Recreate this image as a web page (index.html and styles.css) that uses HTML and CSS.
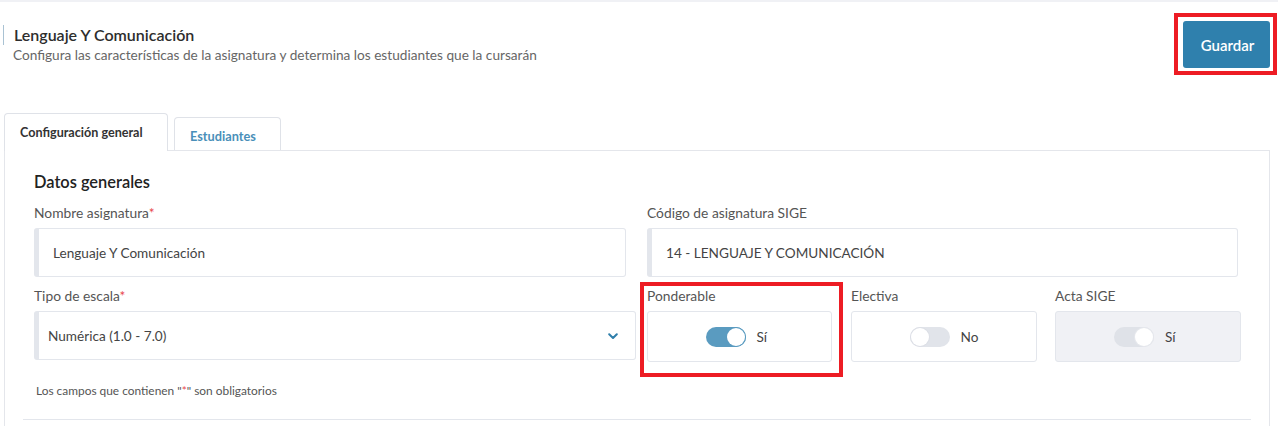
FILE: index.html
```html
<!DOCTYPE html>
<html lang="es">
<head>
<meta charset="utf-8">
<title>Lenguaje Y Comunicación</title>
<link rel="stylesheet" href="styles.css">
</head>
<body>
<div class="topbar"></div>
<header class="page-header">
  <div class="title-block">
    <h1 class="title">Lenguaje Y Comunicación</h1>
    <p class="subtitle">Configura las características de la asignatura y determina los estudiantes que la cursarán</p>
  </div>
  <div class="annotated annotated-btn">
    <button class="btn-primary">Guardar</button>
  </div>
</header>

<nav class="tabs">
  <div class="tab tab-active">Configuración general</div>
  <div class="tab tab-link">Estudiantes</div>
</nav>

<section class="panel">
  <div class="panel-inner">
    <h2 class="section-title">Datos generales</h2>
    <div class="row row-1">
      <div class="field field-name">
        <label class="label">Nombre asignatura<span class="req">*</span></label>
        <div class="input">Lenguaje Y Comunicación</div>
      </div>
      <div class="field field-code">
        <label class="label">Código de asignatura SIGE</label>
        <div class="input">14 - LENGUAJE Y COMUNICACIÓN</div>
      </div>
    </div>
    <div class="row row-2">
      <div class="field field-select">
        <label class="label">Tipo de escala<span class="req">*</span></label>
        <div class="input select">
          <span>Numérica (1.0 - 7.0)</span>
          <svg class="chevron" width="10" height="7" viewBox="0 0 10 7"><path d="M1.2 1.2 L5 5 L8.8 1.2" fill="none" stroke="#2f7fab" stroke-width="2" stroke-linecap="round" stroke-linejoin="round"/></svg>
        </div>
      </div>
      <div class="field field-toggle annotated annotated-pond">
        <label class="label">Ponderable</label>
        <div class="toggle-box">
          <span class="switch on"><span class="knob"></span></span>
          <span class="toggle-text">Sí</span>
        </div>
      </div>
      <div class="field field-toggle field-elect">
        <label class="label">Electiva</label>
        <div class="toggle-box">
          <span class="switch off"><span class="knob"></span></span>
          <span class="toggle-text">No</span>
        </div>
      </div>
      <div class="field field-toggle field-acta">
        <label class="label">Acta SIGE</label>
        <div class="toggle-box disabled">
          <span class="switch dis"><span class="knob"></span></span>
          <span class="toggle-text">Sí</span>
        </div>
      </div>
    </div>
    <p class="note">Los campos que contienen "<span class="req">*</span>" son obligatorios</p>
  </div>
  <div class="divider"></div>
</section>
</body>
</html>
```

FILE: styles.css
```css
* { box-sizing: border-box; }
html, body { margin: 0; padding: 0; background: #fff; }
body {
  font-family: "Lato", "Open Sans", sans-serif;
  color: #333;
  width: 1278px;
  height: 426px;
  overflow: hidden;
}
.topbar { height: 2px; background: #f0f1f5; }

.page-header {
  display: flex;
  justify-content: space-between;
  align-items: flex-start;
  padding: 19px 8px 0 3px;
  height: 111px;
}
.title-block {
  border-left: 1px solid #a9c2d3;
  padding-left: 9px;
  margin-top: 4px;
  height: 20px;
}
.title {
  margin: 0;
  font-size: 16px;
  font-weight: 600;
  color: #2d2d2d;
  line-height: 20px;
  padding-left: 1px;
}
.subtitle {
  margin: 1px 0 0;
  font-size: 13.65px;
  color: #666;
  line-height: 18px;
  white-space: nowrap;
}
.annotated { position: relative; }
.annotated::after {
  content: "";
  position: absolute;
  border: 4px solid #ed1c24;
  pointer-events: none;
}
.annotated-btn::after { left: -9px; top: -8px; right: -7px; bottom: -7px; }
.btn-primary {
  display: block;
  width: 87px;
  height: 47px;
  border: none;
  border-radius: 3px;
  background: #2f80ad;
  color: #fff;
  font-family: inherit;
  font-size: 15px;
  font-weight: 600;
  padding: 0 0 0 2px;
}

.tabs {
  display: flex;
  align-items: flex-end;
  gap: 6px;
  padding-left: 4px;
  height: 37px;
  position: relative;
  z-index: 1;
}
.tab {
  border: 1px solid #dfe2e8;
  border-bottom: none;
  border-radius: 4px 4px 0 0;
  font-weight: 700;
  background: #fff;
  white-space: nowrap;
}
.tab-active { height: 38px; line-height: 38px; color: #333; padding: 0 15px; margin-bottom: -1px; width: 164px; font-size: 12.6px; }
.tab-link { height: 33px; line-height: 36px; color: #4a8fb9; width: 107px; padding-left: 15px; font-size: 12.75px; }

.panel {
  margin-left: 4px;
  width: 1266px;
  border: 1px solid #e4e6eb;
  border-bottom: none;
  height: 280px;
}
.panel-inner { padding: 21px 0 0 29px; }
.section-title {
  margin: 0 0 13px;
  font-size: 16.4px;
  font-weight: 600;
  color: #222;
  line-height: 20px;
}
.row { display: flex; }
.row-1 { gap: 21px; }
.row-2 { margin-top: 11px; }
.label {
  display: block;
  font-size: 13.8px;
  color: #555;
  line-height: 16px;
  margin-bottom: 7px;
  white-space: nowrap;
}
.req { color: #e8474c; }
.input {
  height: 49px;
  border: 1px solid #e3e6ec;
  border-left: 5px solid #e3e6ec;
  border-radius: 3px;
  display: flex;
  align-items: center;
  padding-left: 14px;
  font-size: 13.6px;
  color: #444;
  white-space: nowrap;
}
.field-name { width: 592px; }
.field-code { width: 591px; }
.field-select { width: 602px; }
.select { padding-left: 9px; padding-right: 17px; justify-content: space-between; }
.chevron { display: block; margin-top: 2px; }
.field-toggle { width: 185px; }
.annotated-pond { margin-left: 11px; }
.annotated-pond::after { left: -7px; top: -6px; right: -11px; bottom: -15px; }
.field-elect { margin-left: 19px; width: 186px; }
.field-acta { margin-left: 18px; width: 186px; }
.toggle-box {
  height: 51px;
  border: 1px solid #e3e6ec;
  border-radius: 3px;
  display: flex;
  align-items: center;
  justify-content: center;
  gap: 11px;
  font-size: 13.6px;
  color: #444;
}
.toggle-box.disabled { background: #f0f1f5; }
.switch {
  width: 40px;
  height: 20px;
  border-radius: 10px;
  display: flex;
  align-items: center;
  padding: 1px;
}
.switch .knob {
  width: 18px;
  height: 18px;
  border-radius: 50%;
  background: #fff;
}
.switch.on { background: #5a9bc0; justify-content: flex-end; }
.switch.on .knob { box-shadow: 0 0 0 1px #5a9bc0; }
.switch.off { background: #e1e4ea; justify-content: flex-start; }
.switch.off .knob { box-shadow: 0 0 0 1px #dcdfe6; }
.switch.dis { background: #dfe2e8; justify-content: flex-end; }
.switch.dis .knob { box-shadow: 0 0 0 1px #e6e8ed; }
.toggle-text { min-width: 17px; }

.note {
  margin: 22px 0 0 2px;
  font-size: 11.9px;
  color: #555;
  line-height: 14px;
}
.divider {
  margin: 21px 18px 0 18px;
  height: 1px;
  background: #e3e6ec;
}
```
